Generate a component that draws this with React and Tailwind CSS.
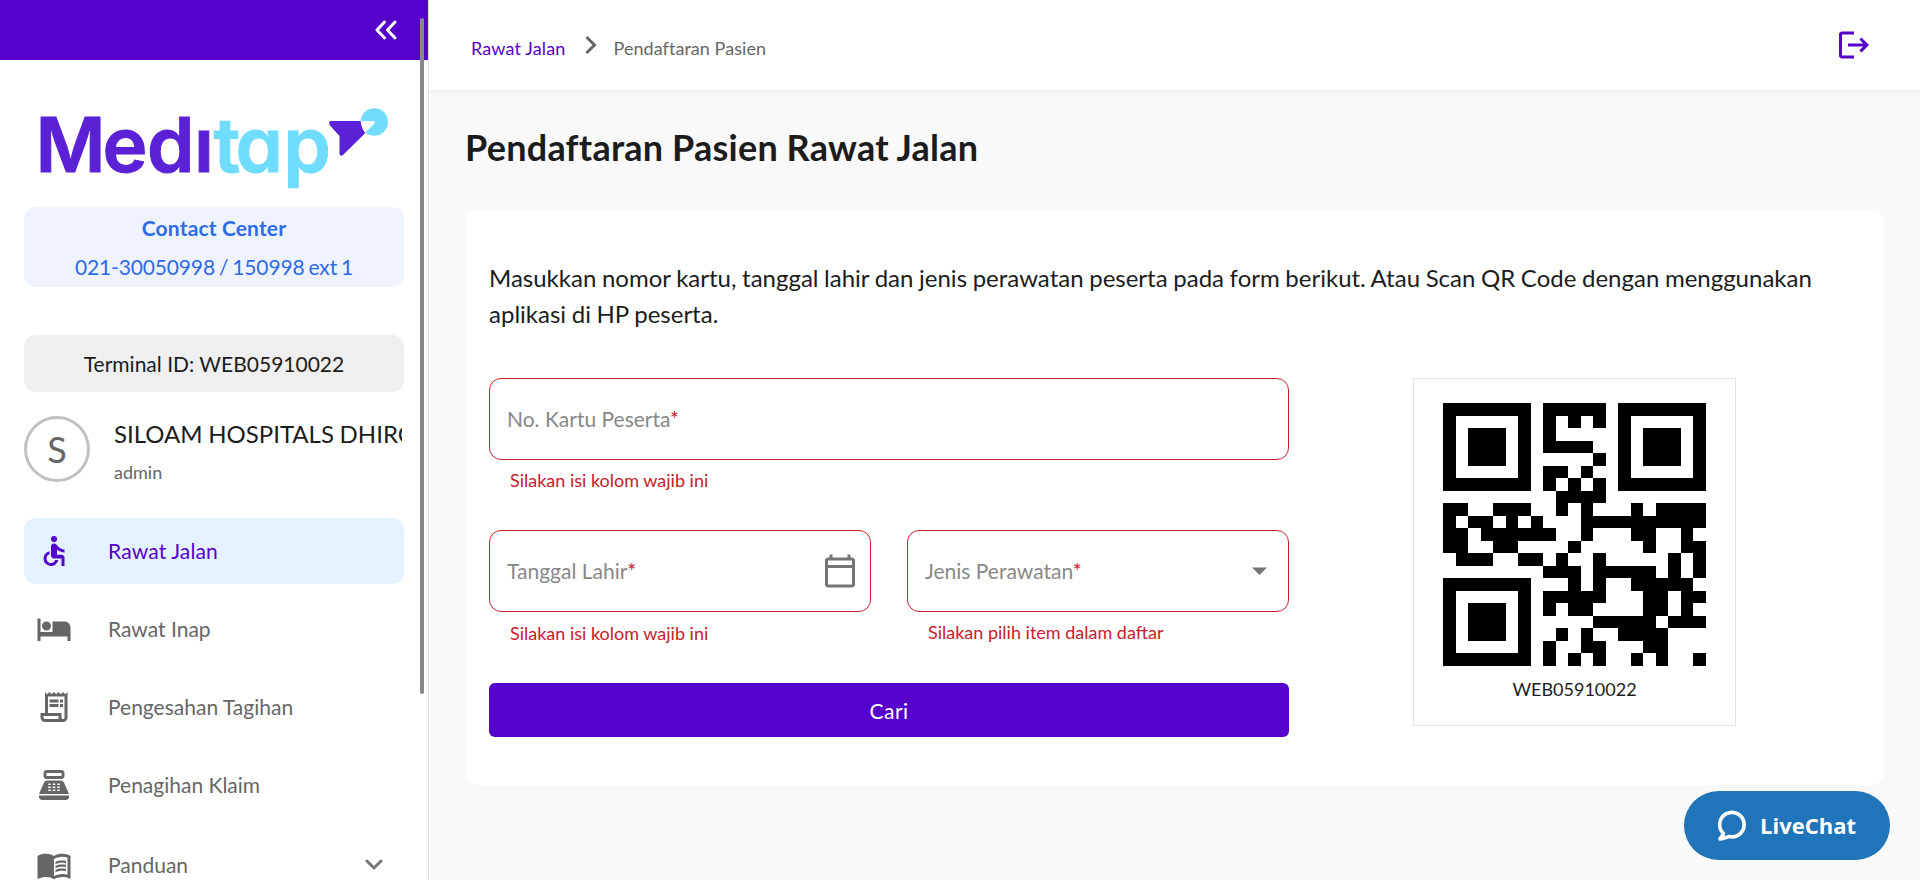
import { MdAccessible, MdOutlineReceiptLong, MdPointOfSale, MdMenuBook, MdHotel, MdLogout, MdOutlineCalendarToday } from "react-icons/md";

const QR = [
  "111111101111101111111",
  "100000101010101000001",
  "101110101000001011101",
  "101110101111001011101",
  "101110100000101011101",
  "100000101101001000001",
  "111111101010101111111",
  "000000000111100000000",
  "110011100101000101111",
  "101101010001111111111",
  "110111111001000110010",
  "110011000010000010011",
  "011100110100100000101",
  "000000001110111110101",
  "111111100010100111110",
  "100000101111100011011",
  "101110101011000011010",
  "101110100000111110111",
  "101110100101001111000",
  "100000101001100011000",
  "111111101010100101001",
];

function QrCode() {
  return (
    <svg className="block h-[262.5px] w-[262.5px]" viewBox="0 0 21 21" shapeRendering="crispEdges">
      {QR.flatMap((row, y) =>
        [...row.matchAll(/1+/g)].map((m) => (
          <rect key={`${y}-${m.index}`} x={m.index} y={y} width={m[0].length} height={1} fill="#000" />
        ))
      )}
    </svg>
  );
}

function Logo() {
  return (
    <svg className="block h-[116px] w-[380px]" viewBox="24 88 380 116" role="img" aria-label="Meditap">
      <g fontFamily="Inter, sans-serif" fontWeight="600" fontSize="76" strokeWidth="1" style={{ fontFeatureSettings: '"cv11"' }}>
        <text x="35.5 102.5 147 194" y="171.5" fill="#5b21d6" stroke="#5b21d6">Medı</text>
        <text x="213.5 235.5 283.5" y="171.5" fill="#70dcff" stroke="#70dcff">tap</text>
      </g>
      <circle cx="374.3" cy="122" r="13.7" fill="#70dcff" />
      <path d="M360 121H373.5Q376 121.800 374.500 123.500L364 134Z" fill="#fff" />
      <path d="M331 121H360.700C361 126 362.500 130 365.300 133L343 155Q340 157 339.500 154V136L330 125.500C328.500 123.500 329 121 331 121Z" fill="#5b21d6" />
    </svg>
  );
}

const items = [
  { label: "Rawat Jalan", Icon: MdAccessible, active: true },
  { label: "Rawat Inap", Icon: MdHotel },
  { label: "Pengesahan Tagihan", Icon: MdOutlineReceiptLong },
  { label: "Penagihan Klaim", Icon: MdPointOfSale },
  { label: "Panduan", Icon: MdMenuBook, expandable: true },
];

function Sidebar() {
  return (
    <aside className="relative h-full w-[429px] shrink-0 overflow-hidden border-r border-[#e0e0e0] bg-white">
      <div className="flex h-15 items-center justify-end bg-[#5500cb] pr-[31px]">
        <svg className="h-5 w-[22px]" viewBox="0 0 22 20" fill="none" stroke="#fff" strokeWidth="3" strokeLinecap="round" strokeLinejoin="round">
          <path d="M9.500 2L2 10L9.500 18M20 2L12.500 10L20 18" />
        </svg>
      </div>
      <div className="flex flex-col px-6">
        <div className="mt-7 h-[116px]"><Logo /></div>
        <div className="mt-[3px] flex h-20 flex-col items-center rounded-xl bg-[#eef3ff] pt-px text-[21px] leading-[39px] text-[#2f6be6]">
          <div className="font-bold tracking-[0.15px]">Contact Center</div>
          <div className="tracking-[-0.15px] [word-spacing:-1.2px]">021-30050998 / 150998 ext 1</div>
        </div>
        <div className="mt-12 flex h-[57px] items-center justify-center rounded-xl bg-[#efefef] text-[21px] text-[#1c1c1c]">Terminal ID: WEB05910022</div>
        <div className="mt-6 flex h-[66px]">
          <div className="flex size-[66px] shrink-0 items-center justify-center rounded-full border-3 border-[#c1c1c1] text-[36px] text-[#666]">S</div>
          <div className="ml-6 w-[288px] overflow-hidden">
            <div className="h-9 text-[24px] leading-9 whitespace-nowrap text-[#1c1c1c] [word-spacing:-0.5px]">SILOAM HOSPITALS DHIROSUMARTO</div>
            <div className="text-[18px] leading-10 text-[#666]">admin</div>
          </div>
        </div>
        <nav className="mt-9 flex flex-col gap-3">
          {items.map(({ label, Icon, active, expandable }) => (
            <a key={label} className={`flex h-[66px] items-center rounded-xl ${active ? "bg-[#e4f2ff] tracking-[0.15px] text-[#5500cb]" : "text-[#666]"} ${expandable ? "mt-0.5" : ""}`}>
              <Icon className="ml-3 size-9 shrink-0" />
              <span className="ml-9 text-[21px]">{label}</span>
              {expandable && (
                <svg className="mr-[21px] ml-auto h-3 w-[18px]" viewBox="0 0 18 12" fill="none" stroke="#777" strokeWidth="3" strokeLinecap="round" strokeLinejoin="round">
                  <path d="M2 2L9 9L16 2" />
                </svg>
              )}
            </a>
          ))}
        </nav>
      </div>
      <div className="absolute top-[18px] left-[420px] h-[676px] w-1 rounded-full bg-[#888]" />
    </aside>
  );
}

function Field({ label, error, children, errorClass = "" }) {
  return (
    <div className="flex-1">
      <div className="flex h-[82px] items-center justify-between rounded-xl border border-[#c8202c] px-[17px] text-[21px] text-[#888]">
        <span>{label}<span className="text-[#c8202c]">*</span></span>
        {children}
      </div>
      <div className={`h-10 pl-[21px] text-[18px] leading-10 text-[#c8202c] ${errorClass}`}>{error}</div>
    </div>
  );
}

export default function App() {
  return (
    <div className="flex h-[880px] w-[1920px] overflow-hidden bg-[#f9f9f9] font-[Lato,sans-serif]">
      <Sidebar />
      <main className="flex min-w-0 flex-1 flex-col">
        <header className="flex h-[90px] shrink-0 items-center bg-white pr-12 pl-[42px] text-[18px] shadow-[0_2px_6px_rgba(0,0,0,0.06)]">
          <span className="pt-[7px] tracking-[0.15px] text-[#5500cb]">Rawat Jalan</span>
          <svg className="ml-[19px] h-5 w-3" viewBox="0 0 12 20" fill="none" stroke="#666" strokeWidth="3">
            <path d="M1.500 2L9.500 10L1.500 18" />
          </svg>
          <span className="ml-[17px] pt-[7px] tracking-[0.05px] text-[#666]">Pendaftaran Pasien</span>
          <MdLogout className="ml-auto size-9 text-[#5500cb]" />
        </header>
        <div className="px-9 pt-[30px]">
          <h1 className="h-[54px] text-[36px] leading-[54px] font-bold tracking-[0.25px] text-[#1c1c1c] [word-spacing:-0.4px]">Pendaftaran Pasien Rawat Jalan</h1>
          <section className="mt-9 h-[575px] rounded-xl bg-white px-6 pt-[50px]">
            <p className="h-[72px] text-[24px] leading-9 text-[#1c1c1c] [word-spacing:-0.53px]">
              Masukkan nomor kartu, tanggal lahir dan jenis perawatan peserta pada form berikut. Atau Scan QR Code dengan menggunakan aplikasi di HP peserta.
            </p>
            <div className="mt-[46px] flex">
              <form className="flex w-[800px] flex-col">
                <div className="flex h-[152px]">
                  <Field label="No. Kartu Peserta" error="Silakan isi kolom wajib ini" />
                </div>
                <div className="flex h-[153px] gap-9">
                  <Field label="Tanggal Lahir" error="Silakan isi kolom wajib ini" errorClass="pt-px">
                    <MdOutlineCalendarToday className="-mr-[5px] size-9 text-[#757575]" />
                  </Field>
                  <Field label="Jenis Perawatan" error="Silakan pilih item dalam daftar">
                    <svg className="mr-1 h-2 w-[15px]" viewBox="0 0 15 8"><path d="M0 0.500H15L7.500 8Z" fill="#757575" /></svg>
                  </Field>
                </div>
                <button type="button" className="h-[54px] rounded-md bg-[#5500cb] pt-0.5 text-[21px] tracking-[0.5px] text-white">Cari</button>
              </form>
              <div className="flex flex-1 justify-center">
                <div className="flex h-[348px] w-[323px] flex-col items-center border border-[#e2e2e2] pt-6">
                  <QrCode />
                  <div className="mt-2.5 text-[18px] leading-[27px] text-[#1c1c1c]">WEB05910022</div>
                </div>
              </div>
            </div>
          </section>
        </div>
      </main>
      <button type="button" className="fixed right-[30px] bottom-5 flex h-[69px] w-[206px] items-center rounded-full bg-[#2074b9] pl-[33px] text-white">
        <svg className="h-8 w-[30px]" viewBox="0 0 30 32" fill="none" stroke="#fff" strokeWidth="3.600" strokeLinejoin="round">
          <path d="M6.500 23.500A12.200 12.200 0 1 1 12 26.500C9 27.500 7 29 3 29C2.500 27.500 6 26.500 6.500 23.500Z" />
        </svg>
        <span className="ml-[13px] font-['Open_Sans',sans-serif] text-[22px] font-bold">LiveChat</span>
      </button>
    </div>
  );
}
